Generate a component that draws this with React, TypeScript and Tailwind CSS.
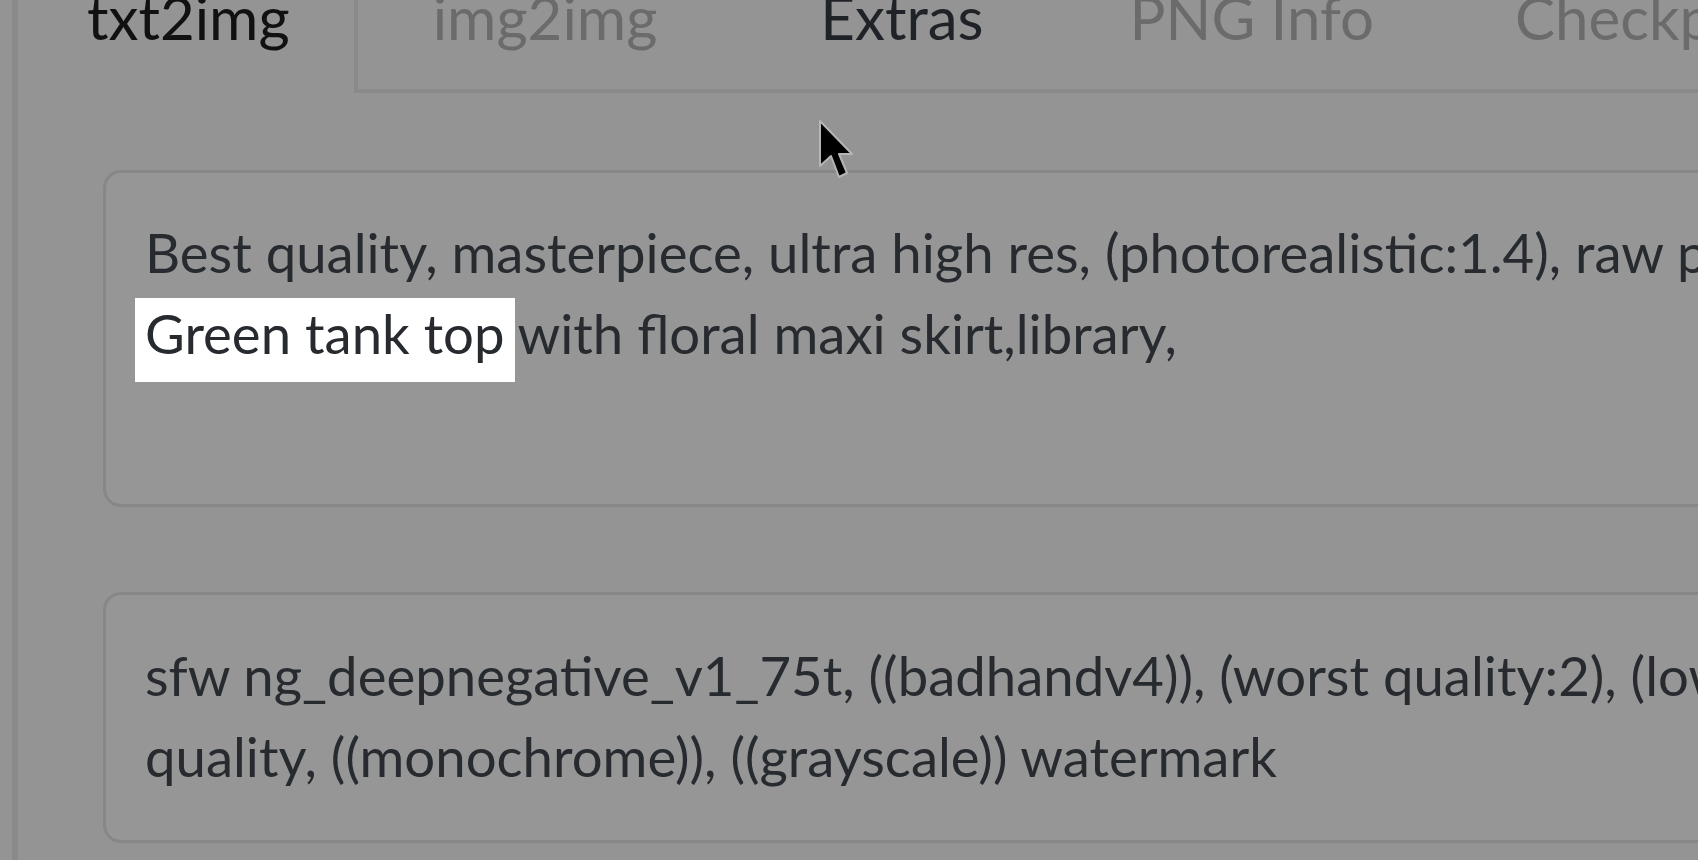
import React from "react";

function Cursor() {
  return (
    <svg
      className="absolute left-[817px] top-[118px]"
      width="40"
      height="64"
      viewBox="-3 -3 40 64"
    >
      <polygon
        points="0,0 0,45 11,35 19,56 27,52 19,33 32,33"
        fill="#000"
        stroke="#b5b5b5"
        strokeWidth="2"
        strokeLinejoin="round"
      />
    </svg>
  );
}

export default function App() {
  return (
    <div className="relative w-[1698px] h-[860px] overflow-hidden bg-[#949494] font-['Lato',sans-serif] text-[#272b30]">
      <div className="ml-[12px] h-full border-l-[6px] border-[#8a8a8a]">
        {/* tabs */}
        <div className="flex h-[93px] items-start">
          <div className="h-full pl-[69px] pr-[64px] border-r-[4px] border-[#8a8a8a]">
            <div className="mt-[-23px] text-[60px] leading-[81px] text-[#111111] whitespace-nowrap">
              txt2img
            </div>
          </div>
          <div className="flex flex-1 h-full border-b-[4px] border-[#8a8a8a]">
            <div className="pl-[75px] pr-[88px] mt-[-23px] text-[60px] leading-[81px] text-[#6b6b6b] whitespace-nowrap">
              img2img
            </div>
            <div className="px-[75px] mt-[-23px] text-[60px] leading-[81px] text-[#1f2226] whitespace-nowrap">
              Extras
            </div>
            <div className="pl-[71px] pr-[66px] mt-[-23px] text-[60px] leading-[81px] text-[#6b6b6b] whitespace-nowrap">
              PNG Info
            </div>
            <div className="px-[75px] mt-[-23px] text-[60px] leading-[81px] text-[#6b6b6b] whitespace-nowrap">
              Checkpoint Merger
            </div>
          </div>
        </div>

        {/* prompt boxes */}
        <div className="pl-[85px] pt-[77px] flex flex-col gap-[85px]">
          <div className="w-[2200px] h-[337px] rounded-[18px] border-[3px] border-[#878787] bg-[#969696] pl-[39px] pt-[39px] text-[54.5px] leading-[81px] whitespace-nowrap">
            <div>Best quality, masterpiece, ultra high res, (photorealistic:1.4), raw photo, 1girl, solo,</div>
            <div>
              <span className="bg-white -ml-[10px] pl-[10px] pr-[10px] -mr-[10px] pt-[2px] pb-[16px]">Green tank top</span>
              {" "}with floral maxi skirt,library,
            </div>
          </div>
          <div className="w-[2200px] h-[251px] rounded-[18px] border-[3px] border-[#878787] bg-[#969696] pl-[39px] pt-[40px] text-[54.5px] leading-[81px] whitespace-nowrap">
            <div>sfw ng_deepnegative_v1_75t, ((badhandv4)), (worst quality:2), (low quality:2), (normal</div>
            <div>quality, ((monochrome)), ((grayscale)) watermark</div>
          </div>
        </div>
      </div>
      <Cursor />
    </div>
  );
}
